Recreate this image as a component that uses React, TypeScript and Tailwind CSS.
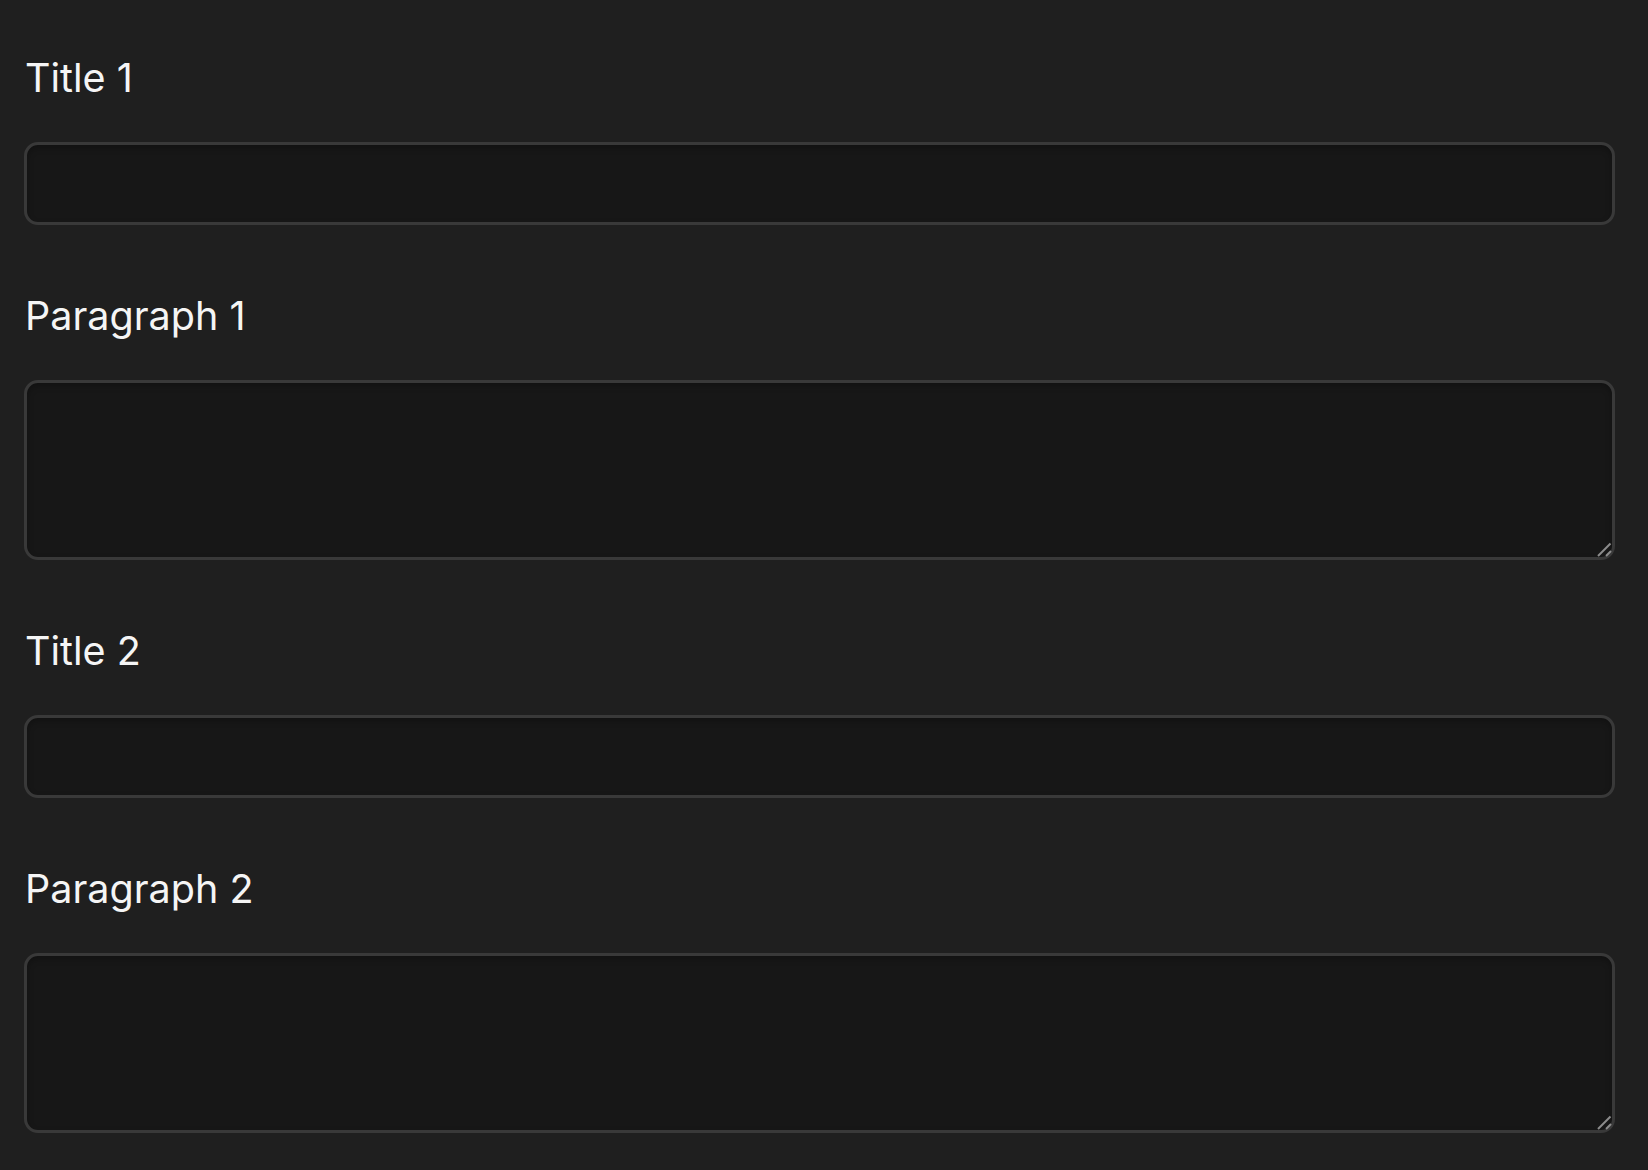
import React from "react"

const fields = [
  { id: "title1", label: "Title 1", multiline: false },
  { id: "paragraph1", label: "Paragraph 1", multiline: true },
  { id: "title2", label: "Title 2", multiline: false },
  { id: "paragraph2", label: "Paragraph 2", multiline: true },
]

const boxClass = "block w-full rounded-[14px] border-[3px] border-[#393939] bg-[#171717] shadow-[inset_0_3px_6px_rgba(0,0,0,0.25)] px-5 text-[39.5px] text-[#f2f2f2] outline-none"

function ResizeGrip() {
  return (
    <svg className="pointer-events-none absolute right-[3px] bottom-[3px] h-[15px] w-[15px]" viewBox="0 0 15 15" fill="none">
      <path d="M1 14 L13.5 1.5" stroke="#8c8c8c" strokeWidth="2" />
      <path d="M9 14 L14 9" stroke="#8c8c8c" strokeWidth="2" />
    </svg>
  )
}

export default function App() {
  return (
    <div className="min-h-[1170px] bg-[#1f1f1f] pt-[54px] pl-6 pr-[33px] font-['Inter','Liberation_Sans',sans-serif] text-[#f5f5f5]">
      <div className="flex flex-col gap-[67px]">
        {fields.map((f) => (
          <div key={f.id}>
            <label htmlFor={f.id} className="mb-10 block text-[39.5px] leading-[48px] pl-[1px]">{f.label}</label>
            {f.multiline ? (
              <div className="relative">
                <textarea id={f.id} className={`${boxClass} h-[180px] resize-none py-3`} />
                <ResizeGrip />
              </div>
            ) : (
              <input id={f.id} type="text" className={`${boxClass} h-[83px]`} />
            )}
          </div>
        ))}
      </div>
    </div>
  )
}
